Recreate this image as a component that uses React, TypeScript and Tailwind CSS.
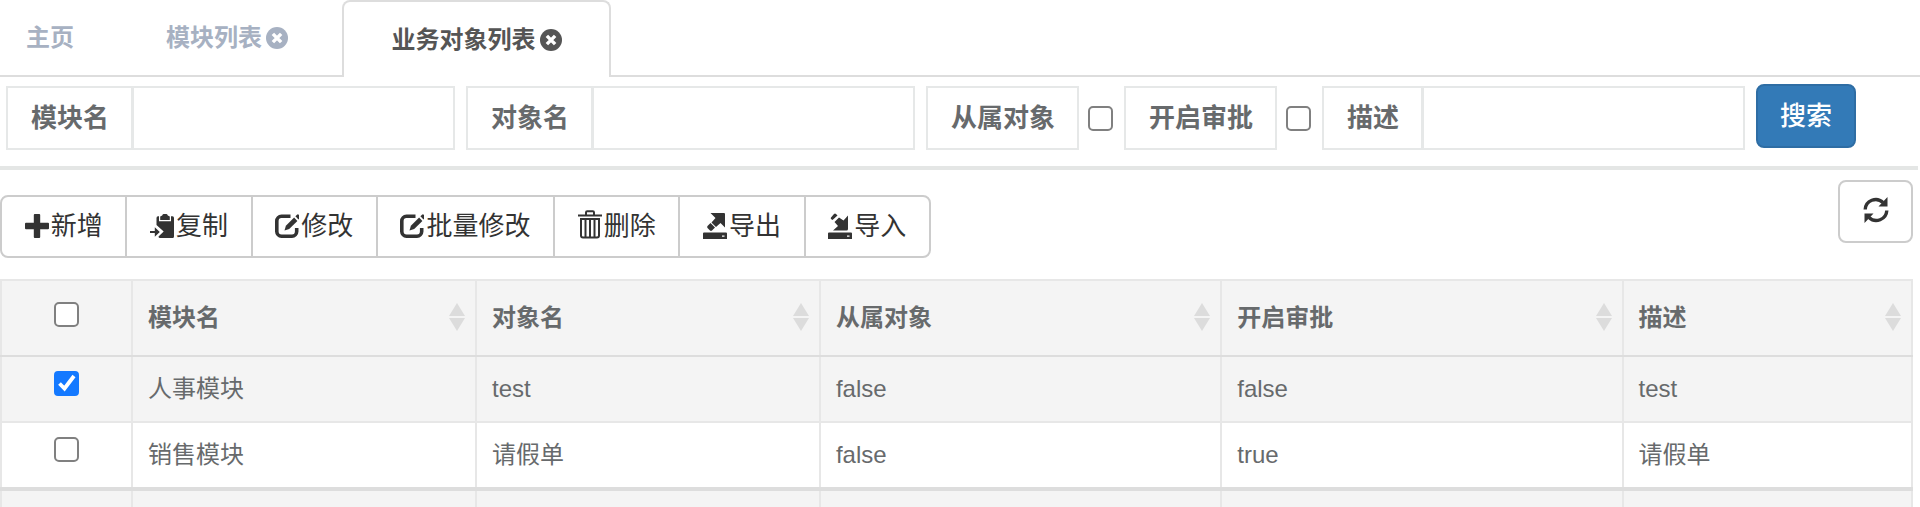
import { useState, type ReactNode } from 'react';

interface ModuleRow {
  module: string;
  name: string;
  subordinate: boolean;
  approval: boolean;
  description: string;
}

const rows: ModuleRow[] = [
  { module: '人事模块', name: 'test', subordinate: false, approval: false, description: 'test' },
  { module: '销售模块', name: '请假单', subordinate: false, approval: true, description: '请假单' },
];

const columns = ['模块名', '对象名', '从属对象', '开启审批', '描述'];

function Icon({ children }: { children: ReactNode }) {
  return (
    <svg viewBox="0 0 24 28" className="h-7 w-6 shrink-0" fill="currentColor" aria-hidden="true">
      {children}
    </svg>
  );
}

const editIcon = (
  <Icon>
    <path
      d="M15.500 3.200H6.500A4.800 4.800 0 0 0 1.800 8v10.500a4.800 4.800 0 0 0 4.700 4.700h10.500a4.800 4.800 0 0 0 4.700-4.700v-3.500"
      fill="none"
      stroke="currentColor"
      strokeWidth="3.600"
    />
    <path d="M9.500 17.500l1.400-4.700 8.200-8.200 3.300 3.300-8.200 8.200z" />
    <path d="M20.400 3.200l1.600-1.500q1-.8 2 .2l1 1q.8 1 0 2l-1.500 1.500z" />
  </Icon>
);

const actions: { label: string; icon: ReactNode }[] = [
  {
    label: '新增',
    icon: (
      <Icon>
        <path d="M9.800 1h4.400q1 0 1 1v7.800H23q1 0 1 1v4.400q0 1-1 1h-7.800V24q0 1-1 1H9.800q-1 0-1-1v-7.800H1q-1 0-1-1v-4.400q0-1 1-1h7.800V2q0-1 1-1z" />
      </Icon>
    ),
  },
  {
    label: '复制',
    icon: (
      <Icon>
        <path d="M13.500 1h3q1 0 1.300 1.500l2 1v3.500h-9.600V3.500l2-1Q12.500 1 13.500 1z" />
        <path d="M6.500 5q0-1.500 1.500-1.700h1v4.900h12V3.300h1.500q1.500.2 1.500 1.700v18.500q0 1.500-1.500 1.500H10q-1.500 0-1.500-1.500l5.200-5-7.200-6.500z" />
        <path d="M0 18h4.800v-3.700l5 4.700-5 4.700V20H0z" />
      </Icon>
    ),
  },
  { label: '修改', icon: editIcon },
  { label: '批量修改', icon: editIcon },
  {
    label: '删除',
    icon: (
      <svg viewBox="0 0 24 34" className="h-[34px] w-6 shrink-0" aria-hidden="true">
        <path
          d="M0 5.500h24M8 5V2.500q0-1.200 1.200-1.200h5.600q1.200 0 1.200 1.200V5M3 9v16.500q0 2 2 2h14q2 0 2-2V9zM7.500 9v18M12 9v18M16.500 9v18"
          fill="none"
          stroke="currentColor"
          strokeWidth="2"
        />
      </svg>
    ),
  },
  {
    label: '导出',
    icon: (
      <Icon>
        <path d="M7.500 0H21q1 0 1 1v13.500l-4.500-4.500-4.500 4-4.500-4.500 4-4.500z" />
        <path d="M4.500 13l3-3 4.500 4.500-3 3q-1 .8-2 0l-2.500-2.500q-.8-1 0-2z" />
        <path fillRule="evenodd" d="M1 19.500h22q1 0 1 1V26H0v-5.500q0-1 1-1zm18 3v1.200h2.500v-1.200z" />
      </Icon>
    ),
  },
  {
    label: '导入',
    icon: (
      <Icon>
        <path d="M20 2.500V16q0 1.500-1.500 1.500H5l5-4.500-3.500-4 4.500-4.500 4.500 3z" />
        <path d="M3 4.500l3-3.500q1-.8 2 0l1.500 1.500-5 4.500L3 6q-.5-.8 0-1.500z" />
        <path fillRule="evenodd" d="M1 19.500h22q1 0 1 1V26H0v-5.500q0-1 1-1zm18 3v1.200h2.500v-1.200z" />
      </Icon>
    ),
  },
];

function CloseIcon() {
  return (
    <svg viewBox="0 0 24 24" className="h-[22px] w-[22px]" aria-hidden="true">
      <circle cx="12" cy="12" r="12" fill="currentColor" />
      <path d="M7.500 7.500l9 9M16.500 7.500l-9 9" stroke="white" strokeWidth="3.800" />
    </svg>
  );
}

function SortIcon() {
  return (
    <svg viewBox="0 0 16 30" className="h-[30px] w-4" fill="#dcdcdc" aria-hidden="true">
      <path d="M8 0l8 13H0zM0 15h16L8 28z" />
    </svg>
  );
}

function Checkbox({ id, label, defaultChecked = false }: { id: string; label?: string; defaultChecked?: boolean }) {
  const [checked, setChecked] = useState(defaultChecked);

  return (
    <span className="inline-grid place-items-center align-top">
      <input
        id={id}
        type="checkbox"
        aria-label={label}
        checked={checked}
        onChange={(e) => setChecked(e.target.checked)}
        className="col-start-1 row-start-1 h-[25px] w-[25px] appearance-none rounded-[5px] border-2 border-[#808080] bg-white checked:rounded-sm checked:border-[#1479ff] checked:bg-[#1479ff]"
      />
      {checked && (
        <svg viewBox="0 0 24 24" className="pointer-events-none col-start-1 row-start-1 h-6 w-6" aria-hidden="true">
          <path d="M4.500 12.500l5 5L19 5" fill="none" stroke="white" strokeWidth="3.800" />
        </svg>
      )}
    </span>
  );
}

const boxClass = 'flex h-16 items-center border-2 border-[#e6e8e8] pr-[22px] pl-[23px] text-[26px] font-bold whitespace-nowrap';

function TextField({ id, label }: { id: string; label: string }) {
  return (
    <div className="flex">
      <label htmlFor={id} className={boxClass}>
        {label}
      </label>
      <input id={id} type="text" className="h-16 w-[322px] border-2 border-l-1 border-[#e6e8e8] px-[22px] text-[26px] outline-none" />
    </div>
  );
}

function CheckField({ id, label }: { id: string; label: string }) {
  return (
    <div className="flex items-center gap-[9px]">
      <label htmlFor={id} className={boxClass}>
        {label}
      </label>
      <Checkbox id={id} />
    </div>
  );
}

const cell = 'border-2 border-[#e7e7e7] px-[15px]';

export default function App() {
  return (
    <div className="h-screen overflow-hidden bg-white font-['Liberation_Sans','Noto_Sans_CJK_SC',sans-serif] text-[#676a6c]">
      {/* Tabs */}
      <nav className="flex h-[77px] border-b-2 border-[#dddddd] text-2xl font-bold text-[#a7b1c2]">
        <a href="#home" className="flex w-[126px] items-center pl-[26px]">
          主页
        </a>
        <div className="flex w-[216px] items-center gap-1 pl-10">
          <a href="#modules">模块列表</a>
          <button type="button" aria-label="关闭模块列表">
            <CloseIcon />
          </button>
        </div>
        <div className="-mb-[2px] flex w-[269px] items-center justify-center gap-1 rounded-t-lg border-2 border-b-0 border-[#dddddd] bg-white text-[#555555]">
          <a href="#objects">业务对象列表</a>
          <button type="button" aria-label="关闭业务对象列表">
            <CloseIcon />
          </button>
        </div>
      </nav>

      {/* Search form */}
      <form className="mr-[2px] flex h-[93px] items-start gap-[11px] border-b-4 border-[#e4e6e5] pt-[9px] pl-[6px]" onSubmit={(e) => e.preventDefault()}>
        <TextField id="module" label="模块名" />
        <TextField id="object" label="对象名" />
        <CheckField id="subordinate" label="从属对象" />
        <CheckField id="approval" label="开启审批" />
        <TextField id="description" label="描述" />
        <button
          type="submit"
          className="-mt-[2px] h-16 rounded-lg border-2 border-[#2e6da4] bg-[#337ab7] px-[22px] text-[26px] font-medium text-white"
        >
          搜索
        </button>
      </form>

      {/* Toolbar */}
      <div className="flex items-start justify-between pt-[10px] pr-[7px] text-[#333333]">
        <div className="mt-[15px] flex h-[63px] w-[931px] divide-x-2 divide-[#cccccc] overflow-hidden rounded-lg border-2 border-[#cccccc]">
          {actions.map((action) => (
            <button key={action.label} type="button" className="flex flex-auto items-center justify-center gap-[2px] text-[26px] whitespace-nowrap">
              {action.icon}
              {action.label}
            </button>
          ))}
        </div>
        <button type="button" aria-label="刷新" className="flex h-[63px] w-[75px] items-center justify-center rounded-lg border-2 border-[#cccccc]">
          <svg viewBox="0 0 26 30" className="h-[30px] w-[26px]" aria-hidden="true">
            <path d="M2.200 12.500A10.500 10.500 0 0 1 20 5.500M23.800 13.500A10.500 10.500 0 0 1 6 20.500" fill="none" stroke="currentColor" strokeWidth="3.400" />
            <path d="M24.500 0v9.500H15.500zM1.500 26v-9.500h9z" fill="currentColor" />
          </svg>
        </button>
      </div>

      {/* Data table */}
      <div className="mt-[21px] mr-[7px]">
        <table className="w-full table-fixed border-collapse text-2xl">
          <colgroup>
            <col className="w-[131px]" />
            <col className="w-[18%]" />
            <col className="w-[18%]" />
            <col className="w-[21%]" />
            <col className="w-[21%]" />
            <col />
          </colgroup>
          <thead>
            <tr className="h-[76px] bg-[#f4f4f4]">
              <th className={`${cell} border-b-[#dddddd] text-center`}>
                <Checkbox id="all" label="全选" />
              </th>
              {columns.map((column) => (
                <th key={column} className={`${cell} border-b-[#dddddd] pr-[10px] text-left`}>
                  <div className="flex items-center justify-between">
                    {column}
                    <SortIcon />
                  </div>
                </th>
              ))}
            </tr>
          </thead>
          <tbody>
            {rows.map((row, i) => (
              <tr key={row.module} className="h-[66px] last:h-[67px] odd:bg-[#f4f4f4]">
                <td className={`${cell} pb-[5px] text-center`}>
                  <Checkbox id={`row-${i}`} label={row.module} defaultChecked={i === 0} />
                </td>
                <td className={cell}>{row.module}</td>
                <td className={cell}>{row.name}</td>
                <td className={cell}>{String(row.subordinate)}</td>
                <td className={cell}>{String(row.approval)}</td>
                <td className={cell}>{row.description}</td>
              </tr>
            ))}
          </tbody>
          <tfoot>
            <tr className="h-[77px] bg-[#f4f4f4]">
              <td className={`${cell} border-t-4 border-t-[#dddddd]`} />
              {columns.map((column) => (
                <td key={column} className={`${cell} border-t-4 border-t-[#dddddd]`} />
              ))}
            </tr>
          </tfoot>
        </table>
      </div>
    </div>
  );
}
